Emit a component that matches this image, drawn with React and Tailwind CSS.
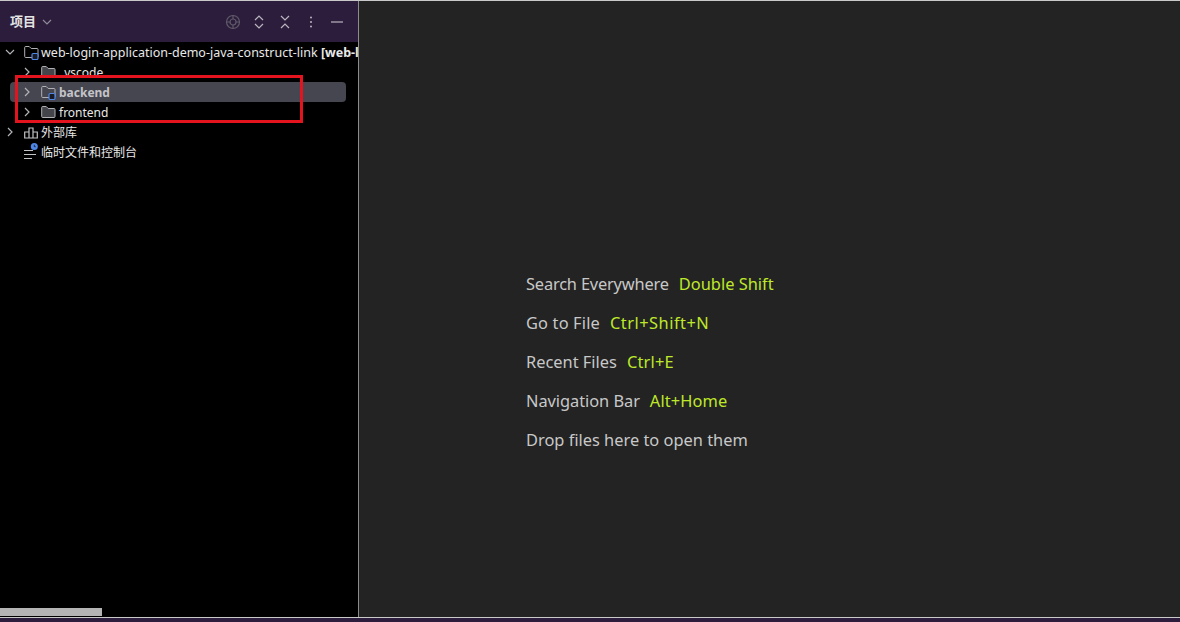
import React from 'react';

const uiFont = { fontFamily: '"Noto Sans", "Noto Sans CJK SC", sans-serif' };

const Chevron = ({ open }) => (
    <svg width="10" height="10" viewBox="0 0 10 10" fill="none" stroke="#b4b4b8" strokeWidth="1.2" className="shrink-0">
        {open ? <path d="M1 3l4 4 4-4" /> : <path d="M3 1l4 4-4 4" />}
    </svg>
);

const Folder = ({ badge }) => (
    <svg width="16" height="16" viewBox="0 0 16 16" fill="none" className="shrink-0">
        <path d="M.7 12.5V3.5a1 1 0 0 1 1-1h3.5l2 2h5.8a1 1 0 0 1 1 1v7a1 1 0 0 1-1 1H1.7a1 1 0 0 1-1-1z" fill={badge ? 'none' : '#43454a'} stroke="#b0b1b5" />
        {badge && <rect x="8" y="9.5" width="6" height="6" rx="1.2" fill="#1a1a22" stroke="#4f87e8" strokeWidth="1.2" />}
    </svg>
);

const Row = ({ indent, open, icon, selected, children }) => (
    <div className={`relative h-5 flex items-center ${indent}`}>
        {selected && <div className="absolute left-[10px] right-3 top-0 bottom-0 rounded bg-[#464650]" />}
        <div className="relative flex items-center gap-[9px] whitespace-nowrap">
            {open !== undefined && <Chevron open={open} />}
            {open === undefined && <span className="w-[10px]" />}
            {icon}
            {children}
        </div>
    </div>
);

const Hint = ({ label, keys, labelClass = '', keysClass = '' }) => (
    <div className="h-[39px] flex items-center gap-[10px] text-[16.4px] text-[#c8c8c8]">
        <span className={labelClass}>{label}</span>
        {keys && <span className={`text-[#bfe82a] ${keysClass}`}>{keys}</span>}
    </div>
);

export default function App() {
    return (
        <div style={uiFont} className="w-[1180px] h-[622px] flex flex-col overflow-hidden bg-[#2c1d3c]">
            <div className="flex-1 min-h-0 flex border-t border-[#c9c9c9] border-b">
                <div className="relative w-[358px] shrink-0 flex flex-col bg-black overflow-hidden">
                    <div className="h-[41px] shrink-0 flex items-center justify-between pl-[10px] pr-[13px] bg-[#2c1d3c] text-white">
                        <div className="flex items-center gap-[6px]">
                            <span className="text-[13px] font-bold text-[#e4e4e4]">项目</span>
                            <svg width="10" height="10" viewBox="0 0 10 10" fill="none" stroke="#8f8a99" strokeWidth="1.2"><path d="M1 3l4 4 4-4" /></svg>
                        </div>
                        <div className="flex items-center gap-[10px]">
                            <svg width="16" height="16" viewBox="0 0 16 16" fill="none" stroke="#5f5a68" strokeWidth="1.2"><circle cx="8" cy="8" r="6.5" /><circle cx="8" cy="8" r="3" /><path d="M8 1v4M8 11v4M1 8h4M11 8h4" /></svg>
                            <svg width="16" height="16" viewBox="0 0 16 16" fill="none" stroke="#b9b6bf" strokeWidth="1.2"><path d="M4 6l4-4 4 4M4 10l4 4 4-4" /></svg>
                            <svg width="16" height="16" viewBox="0 0 16 16" fill="none" stroke="#b9b6bf" strokeWidth="1.2"><path d="M4 2l4 4 4-4M4 14l4-4 4 4" /></svg>
                            <svg width="16" height="16" viewBox="0 0 16 16" fill="#b9b6bf"><circle cx="8" cy="3.5" r="1" /><circle cx="8" cy="8" r="1" /><circle cx="8" cy="12.5" r="1" /></svg>
                            <svg width="16" height="16" viewBox="0 0 16 16" fill="none" stroke="#b9b6bf" strokeWidth="1.2"><path d="M2 8h12" /></svg>
                        </div>
                    </div>
                    <div className="flex-1 min-h-0 text-[12px] text-[#e8e8e8]">
                        <Row indent="pl-[5px]" open={true} icon={<Folder badge />}>
                            <span className="-ml-[8px] pt-[2px] text-[12.5px]">web-login-application-demo-java-construct-link <b>[web-login]</b></span>
                        </Row>
                        <Row indent="pl-[22px]" open={false} icon={<Folder />}>
                            <span className="-ml-[7px] pl-[2px] pt-[2px]">.vscode</span>
                        </Row>
                        <Row indent="pl-[22px]" open={false} selected icon={<Folder badge />}>
                            <span className="-ml-[7px] pt-[2px] font-bold text-[#c4c4c8]">backend</span>
                        </Row>
                        <Row indent="pl-[22px]" open={false} icon={<Folder />}>
                            <span className="-ml-[7px] pt-[2px]">frontend</span>
                        </Row>
                        <Row indent="pl-[5px]" open={false} icon={
                            <svg width="16" height="16" viewBox="0 0 16 16" fill="none" stroke="#c2c3c7" strokeWidth="1.2" className="shrink-0"><path d="M.7 14V8h4.3v6zM5 14V4h4v10zM9 14V8h4.3v6z" /></svg>
                        }>
                            <span className="-ml-[8px] pt-[2px]">外部库</span>
                        </Row>
                        <Row indent="pl-[5px]" icon={
                            <svg width="16" height="20" viewBox="0 -4 16 20" fill="none" className="shrink-0"><path d="M0 4.5h9M0 8.5h12M0 12.5h8" stroke="#c2c3c7" /><circle cx="10.3" cy="0.5" r="3.5" fill="#4f87e8" /><path d="M10.3-1.2v1.9h1.4" stroke="#10131c" strokeWidth="0.8" /></svg>
                        }>
                            <span className="-ml-[8px] pt-[2px]">临时文件和控制台</span>
                        </Row>
                    </div>
                    <div className="h-2 shrink-0 mb-[1px] w-[102px] bg-[#b4b4b4]" />
                    <div className="absolute left-[15px] top-[74px] w-[288px] h-[48px] border-[3px] border-[#e3141e]" />
                </div>
                <div className="flex-1 flex flex-col justify-center pt-[106px] bg-[#232323] border-l border-[#8c8c8c]">
                    <div className="pl-[167px]">
                        <Hint label="Search Everywhere" keys="Double Shift" labelClass="tracking-[-0.18px]" />
                        <Hint label="Go to File" keys="Ctrl+Shift+N" labelClass="tracking-[0.15px]" keysClass="tracking-[0.5px]" />
                        <Hint label="Recent Files" keys="Ctrl+E" keysClass="tracking-[0.2px]" />
                        <Hint label="Navigation Bar" keys="Alt+Home" labelClass="tracking-[-0.05px]" keysClass="tracking-[0.1px]" />
                        <Hint label="Drop files here to open them" />
                    </div>
                </div>
            </div>
            <div className="h-1 shrink-0 bg-[#2c1d3c]" />
        </div>
    );
}
